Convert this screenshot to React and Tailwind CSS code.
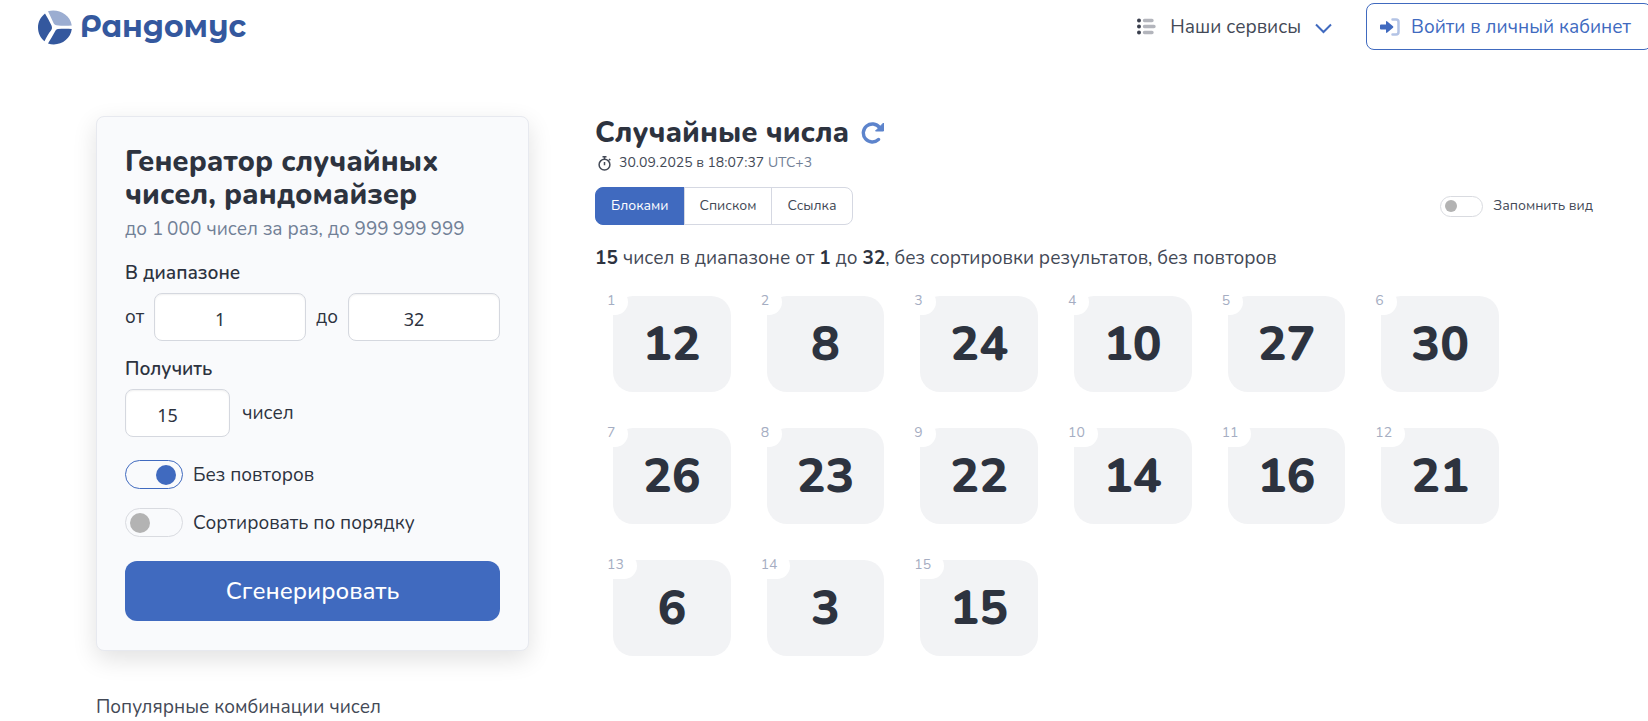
import React, { useState } from 'react';

const NUMBERS = [12, 8, 24, 10, 27, 30, 26, 23, 22, 14, 16, 21, 6, 3, 15];
const VIEWS = ['Блоками', 'Списком', 'Ссылка'];

function Logo() {
  return (
    <a href="#" className="flex items-center gap-2 text-[#34589e]">
      <svg width="34" height="35" viewBox="0 0 34 35" fill="currentColor" aria-hidden="true">
        <path d="M7 3.500C2.500 7 0 12 0 17.500S2.500 28 6.500 31.200C8.500 27 10.500 23.500 13 20.500C14.200 19 14.300 17.500 13.500 15.500C11.500 11.500 9.500 7.500 7 3.500Z" />
        <path d="M10 1.200C20 -1.500 32 4 33.800 15.500C28 16 23 15.800 18.500 15.200C17 15 16.300 14.500 15.500 13C13.500 9 12 5 10 1.200Z" fill="#9badd1" />
        <path d="M33.800 19C32.500 30 21 37 10 33.500C12.500 29.500 14.800 25.500 17 21.500C17.800 20 18.500 19.300 20 19.100C24.500 18.600 29 18.600 33.800 19Z" />
      </svg>
      <span className="font-['Montserrat_Alternates','Lato',sans-serif] text-[30px] leading-9 font-bold">Рандомус</span>
    </a>
  );
}

function Toggle({ id, label, checked, onChange, small }) {
  return (
    <div className={small ? 'flex items-center gap-[10px] text-sm' : 'flex items-center gap-[10px]'}>
      <input
        id={id}
        type="checkbox"
        role="switch"
        checked={checked}
        onChange={(e) => onChange(e.target.checked)}
        className={
          small
            ? "flex h-[21px] w-[43px] shrink-0 appearance-none items-center rounded-full border border-[#d9dbe0] px-1 before:size-3 before:rounded-full before:bg-[#b3b3b3] checked:justify-end checked:border-[#406abf] checked:before:bg-[#406abf]"
            : "flex h-[29px] w-[58px] shrink-0 appearance-none items-center rounded-full border border-[#d9dbe0] pr-[6px] pl-1 before:size-5 before:rounded-full before:bg-[#b3b3b3] checked:justify-end checked:border-[#406abf] checked:before:bg-[#406abf]"
        }
      />
      <label htmlFor={id}>{label}</label>
    </div>
  );
}

export default function App() {
  const [from, setFrom] = useState('1');
  const [to, setTo] = useState('32');
  const [count, setCount] = useState('15');
  const [unique, setUnique] = useState(true);
  const [sorted, setSorted] = useState(false);
  const [remember, setRemember] = useState(false);
  const [view, setView] = useState('Блоками');

  const field = "h-12 rounded-lg border border-[#d5d8df] bg-white pt-1 pr-5 text-center font-['Noto_Sans',sans-serif] text-lg text-[#2d333f] shadow-[inset_0_1px_2px_rgba(0,0,0,0.06)]";

  return (
    <div className="overflow-hidden bg-white font-['Nunito','Lato',sans-serif] text-[19px] leading-7 text-[#434956]">
      {/* Header */}
      <header className="flex items-start justify-between pt-[3px] pl-[38px]">
        <div className="pt-[6px]">
          <Logo />
        </div>
        <nav className="-mr-1 flex items-center gap-[34px]">
          <button type="button" className="flex items-center gap-[14px]">
            <svg width="19" height="18" viewBox="0 0 19 18" aria-hidden="true">
              <g fill="#3a3f4d">
                <circle cx="2" cy="2.500" r="2" />
                <circle cx="2" cy="8.500" r="2" />
                <circle cx="2" cy="14.500" r="2" />
              </g>
              <g stroke="#b3b5bc" strokeWidth="3.400" strokeLinecap="round">
                <path d="M7.500 2.500H15M7.500 8.500H17M7.500 14.500H15" />
              </g>
            </svg>
            Наши сервисы
            <svg width="17" height="14" viewBox="0 0 17 14" fill="none" stroke="#406abf" strokeWidth="2" aria-hidden="true">
              <path d="M1 4.500L8.500 12L16 4.500" />
            </svg>
          </button>
          <button type="button" className="flex h-[47px] items-center gap-[11px] rounded-lg border border-[#406abf] pr-5 pl-[13px] text-[#406abf]">
            <svg width="20" height="18" viewBox="0 0 20 18" aria-hidden="true">
              <path d="M12.500 1.500H16Q18.500 1.500 18.500 4V14Q18.500 16.500 16 16.500H12.500" fill="none" stroke="#b3c3e5" strokeWidth="2.500" strokeLinecap="round" />
              <path d="M1 6.500H6V4Q6 2.500 7.300 3.500L13 8.200Q13.800 9 13 9.800L7.300 14.500Q6 15.500 6 14V11.500H1Q0 11.500 0 10.500V7.500Q0 6.500 1 6.500Z" fill="#406abf" />
            </svg>
            Войти в личный кабинет
          </button>
        </nav>
      </header>

      <main className="flex items-start gap-[66px] pt-[66px] pr-[55px] pl-[96px]">
        <div className="w-[433px] shrink-0">
          {/* Generator form */}
          <form
            onSubmit={(e) => e.preventDefault()}
            className="rounded-lg border border-[#e7e9ef] bg-[#f9fafc] px-[28px] pt-[28px] pb-[29px] text-[#2d333f] shadow-[0_8px_24px_rgba(0,0,0,0.12)]"
          >
            <h1 className="text-[29px] leading-[33px] font-extrabold">Генератор случайных чисел, рандомайзер</h1>
            <p className="mt-1 text-[#718096]">до 1&#8201;000 чисел за раз, до 999&#8201;999&#8201;999</p>

            <fieldset className="mt-4">
              <legend className="mb-[6px] font-semibold">В диапазоне</legend>
              <div className="flex items-center justify-between">
                <label htmlFor="from">от</label>
                <input id="from" className={`${field} w-[152px]`} value={from} onChange={(e) => setFrom(e.target.value)} />
                <label htmlFor="to">до</label>
                <input id="to" className={`${field} w-[152px]`} value={to} onChange={(e) => setTo(e.target.value)} />
              </div>
            </fieldset>

            <label htmlFor="count" className="mt-[14px] mb-[6px] block font-semibold">Получить</label>
            <div className="flex items-center gap-3">
              <input id="count" className={`${field} w-[105px]`} value={count} onChange={(e) => setCount(e.target.value)} />
              <span>чисел</span>
            </div>

            <div className="mt-[23px] flex flex-col gap-[19px]">
              <Toggle id="unique" label="Без повторов" checked={unique} onChange={setUnique} />
              <Toggle id="sorted" label="Сортировать по порядку" checked={sorted} onChange={setSorted} />
            </div>

            <button type="submit" className="mt-6 h-15 w-full rounded-xl bg-[#406abf] text-2xl font-medium text-white">
              Сгенерировать
            </button>
          </form>
          <h2 className="mt-[42px]">Популярные комбинации чисел</h2>
        </div>

        {/* Results */}
        <section className="min-w-0 flex-1">
          <div className="flex items-center gap-3">
            <h2 className="text-[29px] leading-[34px] font-extrabold text-[#2d333f]">Случайные числа</h2>
            <button type="button" aria-label="Обновить">
              <svg width="24" height="22" viewBox="0 0 24 22" fill="none" aria-hidden="true">
                <path d="M18.500 5.500A9 9 0 1 0 17.500 17.500" stroke="#5d84cc" strokeWidth="3.400" strokeLinecap="round" />
                <path d="M22.500 1V9H14.500Z" fill="#5d84cc" stroke="#5d84cc" strokeLinejoin="round" />
              </svg>
            </button>
          </div>
          <p className="flex items-center gap-2 pt-px pl-[3px] text-sm leading-6">
            <svg width="13" height="15" viewBox="0 0 13 15" fill="none" stroke="currentColor" strokeWidth="1.500" aria-hidden="true">
              <circle cx="6.500" cy="8.700" r="5.400" />
              <path d="M4.500 0.800H8.500M6.500 1V3.300M6.500 6V9.200M11 3L12.300 4.300" />
            </svg>
            <span>
              30.09.2025 в 18:07:37 <span className="text-[#718096]">UTC+3</span>
            </span>
          </p>

          <div className="mt-3 flex items-center justify-between">
            <div className="flex h-[38px] text-sm">
              {VIEWS.map((name) => (
                <button
                  key={name}
                  type="button"
                  onClick={() => setView(name)}
                  className={
                    name === view
                      ? 'border border-[#406abf] bg-[#406abf] px-[15px] text-white first:rounded-l-lg last:rounded-r-lg'
                      : '-ml-px border border-[#d5d8e2] px-[15px] first:rounded-l-lg last:rounded-r-lg'
                  }
                >
                  {name}
                </button>
              ))}
            </div>
            <Toggle id="remember" label="Запомнить вид" checked={remember} onChange={setRemember} small />
          </div>

          <p className="mt-[19px]">
            <b className="text-[#2d333f]">15</b> чисел в диапазоне от <b className="text-[#2d333f]">1</b> до{' '}
            <b className="text-[#2d333f]">32</b>, без сортировки результатов, без повторов
          </p>

          <ol className="mt-6 grid max-w-[922px] grid-cols-6 gap-9 px-[18px]">
            {NUMBERS.map((n, i) => (
              <li key={n} className="relative flex h-24 items-center justify-center rounded-[20px] bg-[#f2f3f5] text-5xl font-extrabold text-[#2d333f]">
                <span className="absolute -top-[7px] -left-[19px] h-[26px] rounded-full bg-white px-[13px] text-sm leading-6 font-normal text-[#a5adc2]">
                  {i + 1}
                </span>
                {n}
              </li>
            ))}
          </ol>
        </section>
      </main>
    </div>
  );
}
